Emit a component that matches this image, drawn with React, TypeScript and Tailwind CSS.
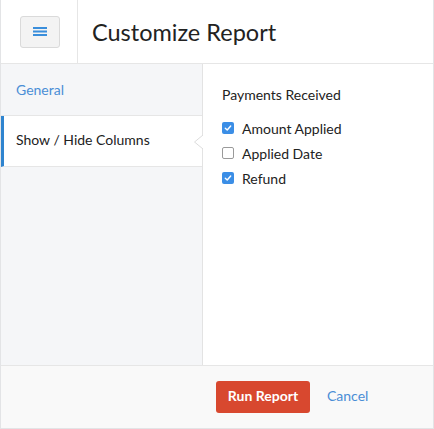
import React from "react";

function Check({ checked }: { checked: boolean }) {
  return checked ? (
    <span className="flex h-[12px] w-[12px] items-center justify-center rounded-[2px] bg-[#3b8ee6]">
      <svg width="8" height="8" viewBox="0 0 8 8" fill="none">
        <path d="M1.3 4.2 L3.2 6 L6.7 2" stroke="white" strokeWidth="1.4" strokeLinecap="round" strokeLinejoin="round" />
      </svg>
    </span>
  ) : (
    <span className="h-[12px] w-[12px] rounded-[2px] border border-[#9a9a9a] bg-white" />
  );
}

export default function App() {
  const cols = [
    { label: "Amount Applied", checked: true },
    { label: "Applied Date", checked: false },
    { label: "Refund", checked: true },
  ];
  return (
    <div
      className="flex h-[429px] w-[434px] flex-col border-x border-b border-[#e3e4e6] bg-white text-[#222]"
      style={{ fontFamily: "Lato, 'Open Sans', sans-serif" }}
    >
      <div className="flex h-[64px] shrink-0 border-b border-[#e6e6e6]">
        <div className="flex w-[77px] items-center justify-center border-r border-[#e6e6e6] pl-[1px]">
          <div className="flex h-[32px] w-[40px] items-center justify-center rounded-[3px] border border-[#dadada] bg-[#f3f3f3]">
            <svg width="14" height="9" viewBox="0 0 14 9">
              <rect x="0" y="0" width="14" height="2" fill="#3a8edb" />
              <rect x="0" y="3.5" width="14" height="2" fill="#3a8edb" />
              <rect x="0" y="7" width="14" height="2" fill="#3a8edb" />
            </svg>
          </div>
        </div>
        <div className="flex items-center pl-[14px] pt-[2px] text-[23.5px] text-[#222]">Customize Report</div>
      </div>
      <div className="flex flex-1">
        <div className="relative w-[202px] shrink-0 border-r border-[#e3e3e3] bg-[#f5f6f8]">
          <div className="flex h-[52px] items-center border-b border-[#e6e6e6] pb-[1px] pl-[15px] text-[14px] text-[#4a8ed6]">
            General
          </div>
          <div className="relative flex h-[51px] items-center border-b border-[#e6e6e6] border-l-[3px] border-l-[#2f84cf] bg-white pb-[3px] pl-[12px] text-[14px] text-[#222]">
            Show / Hide Columns
            <svg className="absolute right-[-1px] top-[19px]" width="10" height="14" viewBox="0 0 10 14">
              <polygon points="10,0 1.5,7 10,14" fill="white" />
              <path d="M10 0 L1.5 7 L10 14" stroke="#dcdcdc" strokeWidth="1" fill="none" />
            </svg>
          </div>
        </div>
        <div className="flex-1 pl-[19px] pt-[20px]">
          <div className="text-[14px] text-[#222]">Payments Received</div>
          <div className="mt-[14px] flex flex-col gap-[7px]">
            {cols.map((c) => (
              <div key={c.label} className="flex h-[18px] items-center gap-[8px]">
                <Check checked={c.checked} />
                <span className="text-[14px] text-[#222]">{c.label}</span>
              </div>
            ))}
          </div>
        </div>
      </div>
      <div className="flex h-[63px] shrink-0 items-center border-t border-[#e6e6e6] bg-[#f9f9f9] pl-[215px]">
        <button className="h-[32px] w-[94px] rounded-[3px] bg-[#d8482f] pb-[3px] text-[14px] font-bold text-white">
          Run Report
        </button>
        <span className="ml-[17px] pb-[3px] text-[14px] text-[#4a8ed6]">Cancel</span>
      </div>
    </div>
  );
}
